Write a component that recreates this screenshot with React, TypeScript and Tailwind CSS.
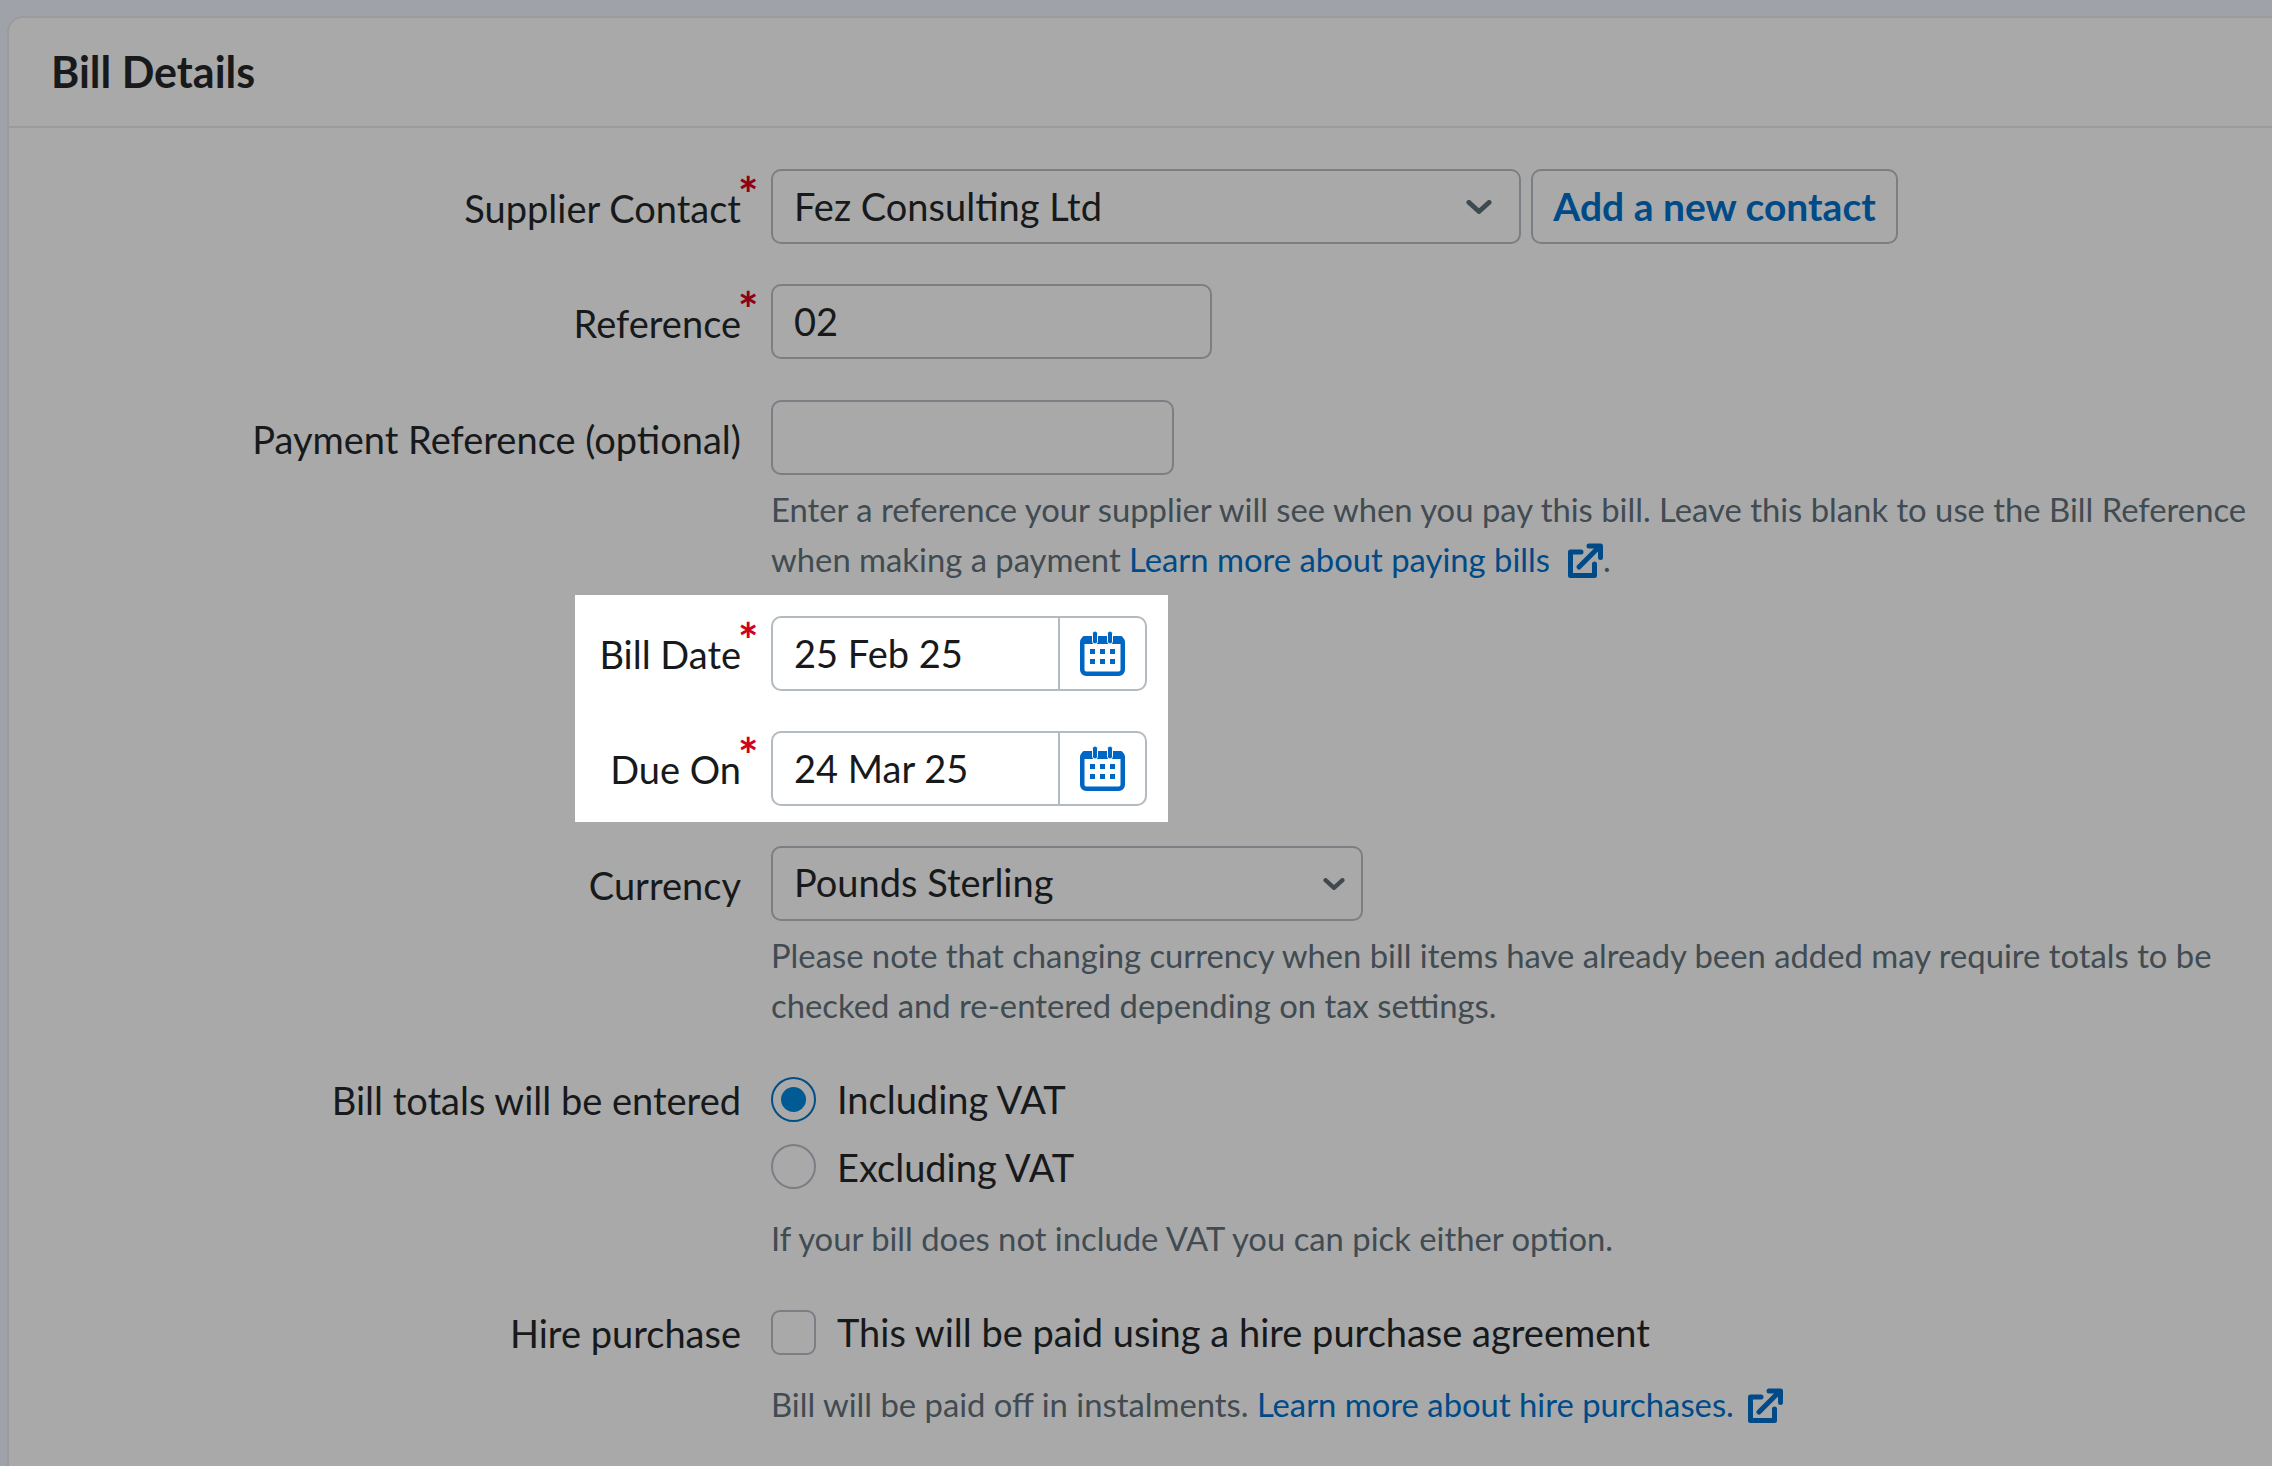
import type { ReactNode } from 'react';

const font = { fontFamily: 'Lato, "Noto Sans", sans-serif' };

function ExternalIcon({ className }: { className: string }) {
  return (
    <svg viewBox="0 0 35 35" fill="none" stroke="#004a87" strokeWidth="5" strokeLinecap="round" strokeLinejoin="round" className={className}>
      <path d="M13 9H2.5v23.500h24V21" />
      <path d="M11 24 31 4" />
      <path d="M21 3h11.500v11.500" />
    </svg>
  );
}

function CalendarIcon() {
  return (
    <svg viewBox="0 0 45 45" className="h-[45px] w-[45px]">
      <rect x="2.25" y="7.25" width="40.5" height="35.5" rx="4" fill="none" stroke="#0066c4" strokeWidth="4.5" />
      <rect x="2.25" y="5" width="40.5" height="8" rx="2" fill="#0066c4" />
      <rect x="12.5" y="0" width="5" height="13" rx="2.5" fill="#0066c4" stroke="#fff" strokeWidth="1" />
      <rect x="27.5" y="0" width="5" height="13" rx="2.5" fill="#0066c4" stroke="#fff" strokeWidth="1" />
      <g fill="#0066c4">
        <rect x="10" y="18" width="5" height="5" />
        <rect x="20" y="18" width="5" height="5" />
        <rect x="30" y="18" width="5" height="5" />
        <rect x="10" y="28" width="5" height="5" />
        <rect x="20" y="28" width="5" height="5" />
        <rect x="30" y="28" width="5" height="5" />
      </g>
    </svg>
  );
}

function Chevron({ className }: { className: string }) {
  return (
    <svg viewBox="0 0 26 14" fill="none" stroke="#3f4a50" strokeWidth="5" strokeLinecap="round" strokeLinejoin="round" className={className}>
      <path d="M3 2.500 13 11.500 23 2.500" />
    </svg>
  );
}

function Label({ text, required, white, className }: { text: string; required?: boolean; white?: boolean; className?: string }) {
  return (
    <span className={`relative whitespace-nowrap text-[38px] text-[#17191b] ${className ?? 'mt-[3px] leading-[72px]'}`}>
      {text}
      {required && (
        <span className={`absolute left-full top-[-8px] ml-[-3px] text-[48px] font-bold leading-[60px] ${white ? 'text-[#d0021b]' : 'text-[#8f0015]'}`}>
          *
        </span>
      )}
    </span>
  );
}

function Row({ label, required, className, labelClass, children }: { label: string; required?: boolean; className?: string; labelClass?: string; children: ReactNode }) {
  return (
    <div className={`flex items-start ${className ?? ''}`}>
      <div className="flex w-[762px] shrink-0 justify-end pr-[30px]">
        <Label text={label} required={required} className={labelClass} />
      </div>
      <div className="min-w-0 flex-1">{children}</div>
    </div>
  );
}

function Box({ className, children }: { className: string; children?: ReactNode }) {
  return (
    <div className={`flex h-[75px] items-center rounded-[10px] border-2 border-[#7b7f83] px-[21px] text-[38px] ${className}`}>
      {children}
    </div>
  );
}

function Help({ children, className }: { children: ReactNode; className?: string }) {
  return <p className={`whitespace-nowrap text-[32.8px] leading-[50px] text-[#414b52] ${className ?? ''}`}>{children}</p>;
}

function DateRow({ label, value, className }: { label: string; value: string; className?: string }) {
  return (
    <div className={`flex items-start ${className ?? ''}`}>
      <div className="flex w-[196px] shrink-0 justify-end pr-[30px]">
        <Label text={label} required white className="mt-[2px] leading-[72px]" />
      </div>
      <div className="flex h-[75px] w-[376px] items-stretch rounded-[10px] border-2 border-[#b3bac0] bg-white">
        <div className="flex flex-1 items-center pl-[21px] text-[38px] text-[#17191b]">{value}</div>
        <div className="flex w-[87px] items-center justify-center border-l-2 border-[#b3bac0]">
          <CalendarIcon />
        </div>
      </div>
    </div>
  );
}

export default function App() {
  return (
    <div style={font} className="h-[1466px] overflow-hidden bg-[#9fa3a9] pl-[7px] pt-[16px]">
      <div className="h-[1500px] rounded-tl-[16px] border-l-2 border-t-2 border-[#999b9f] bg-[#a9a9a9]">
        <header className="flex h-[110px] items-center border-b-2 border-[#999b9f] pl-[42px]">
          <h2 className="text-[43px] font-bold text-[#17191b]">Bill Details</h2>
        </header>

        <form className="pt-[41px]">
          <Row label="Supplier Contact" required>
            <div className="flex gap-[10px]">
              <Box className="w-[750px] justify-between text-[#17191b]">
                <span>Fez Consulting Ltd</span>
                <Chevron className="mr-[6px] h-[14px] w-[26px]" />
              </Box>
              <Box className="w-[367px] justify-center !px-0 font-bold !text-[39px] text-[#004a87]">Add a new contact</Box>
            </div>
          </Row>

          <Row label="Reference" required className="mt-[40px]">
            <Box className="w-[441px] text-[#17191b]">02</Box>
          </Row>

          <Row label="Payment Reference (optional)" className="mt-[41px]">
            <Box className="w-[403px]" />
            <Help className="mt-[10px]">
              Enter a reference your supplier will see when you pay this bill. Leave this blank to use the Bill Reference
              <br />
              when making a payment <span className="text-[#004a87]">Learn more about paying bills</span>
              <ExternalIcon className="ml-[18px] inline-block h-[35px] w-[35px] align-[-6px]" />.
            </Help>
          </Row>

          <div className="ml-[566px] mt-[10px] w-[593px] bg-white pb-[16px] pt-[21px]">
            <DateRow label="Bill Date" value="25 Feb 25" />
            <DateRow label="Due On" value="24 Mar 25" className="mt-[40px]" />
          </div>

          <Row label="Currency" className="mt-[24px]">
            <Box className="w-[592px] justify-between text-[#17191b]">
              <span className="mt-[-2px]">Pounds Sterling</span>
              <Chevron className="mr-[-5px] h-[12px] w-[22px]" />
            </Box>
            <Help className="mt-[10px]">
              Please note that changing currency when bill items have already been added may require totals to be
              <br />
              checked and re-entered depending on tax settings.
            </Help>
          </Row>

          <Row label="Bill totals will be entered" labelClass="mt-[1px] leading-[45px]" className="mt-[46px]">
            <div className="flex items-center gap-[21px] text-[38px] leading-[45px] text-[#17191b]">
              <span className="flex h-[45px] w-[45px] items-center justify-center rounded-full border-2 border-[#004f87]">
                <span className="h-[25px] w-[25px] rounded-full bg-[#005a94]" />
              </span>
              Including VAT
            </div>
            <div className="mt-[21px] flex items-center gap-[21px] text-[38px] leading-[45px] text-[#17191b]">
              <span className="h-[45px] w-[45px] rounded-full border-2 border-[#7b7f83]" />
              <span className="mt-[2px]">Excluding VAT</span>
            </div>
            <Help className="mt-[24px]">If your bill does not include VAT you can pick either option.</Help>
          </Row>

          <Row label="Hire purchase" labelClass="mt-[1px] leading-[45px]" className="mt-[46px]">
            <div className="flex items-center gap-[21px] text-[38px] leading-[45px] text-[#17191b]">
              <span className="h-[45px] w-[45px] rounded-[9px] border-2 border-[#7b7f83]" />
              This will be paid using a hire purchase agreement
            </div>
            <Help className="mt-[25px]">
              Bill will be paid off in instalments. <span className="text-[#004a87]">Learn more about hire purchases.</span>
              <ExternalIcon className="ml-[14px] inline-block h-[35px] w-[35px] align-[-6px]" />
            </Help>
          </Row>
        </form>
      </div>
    </div>
  );
}
